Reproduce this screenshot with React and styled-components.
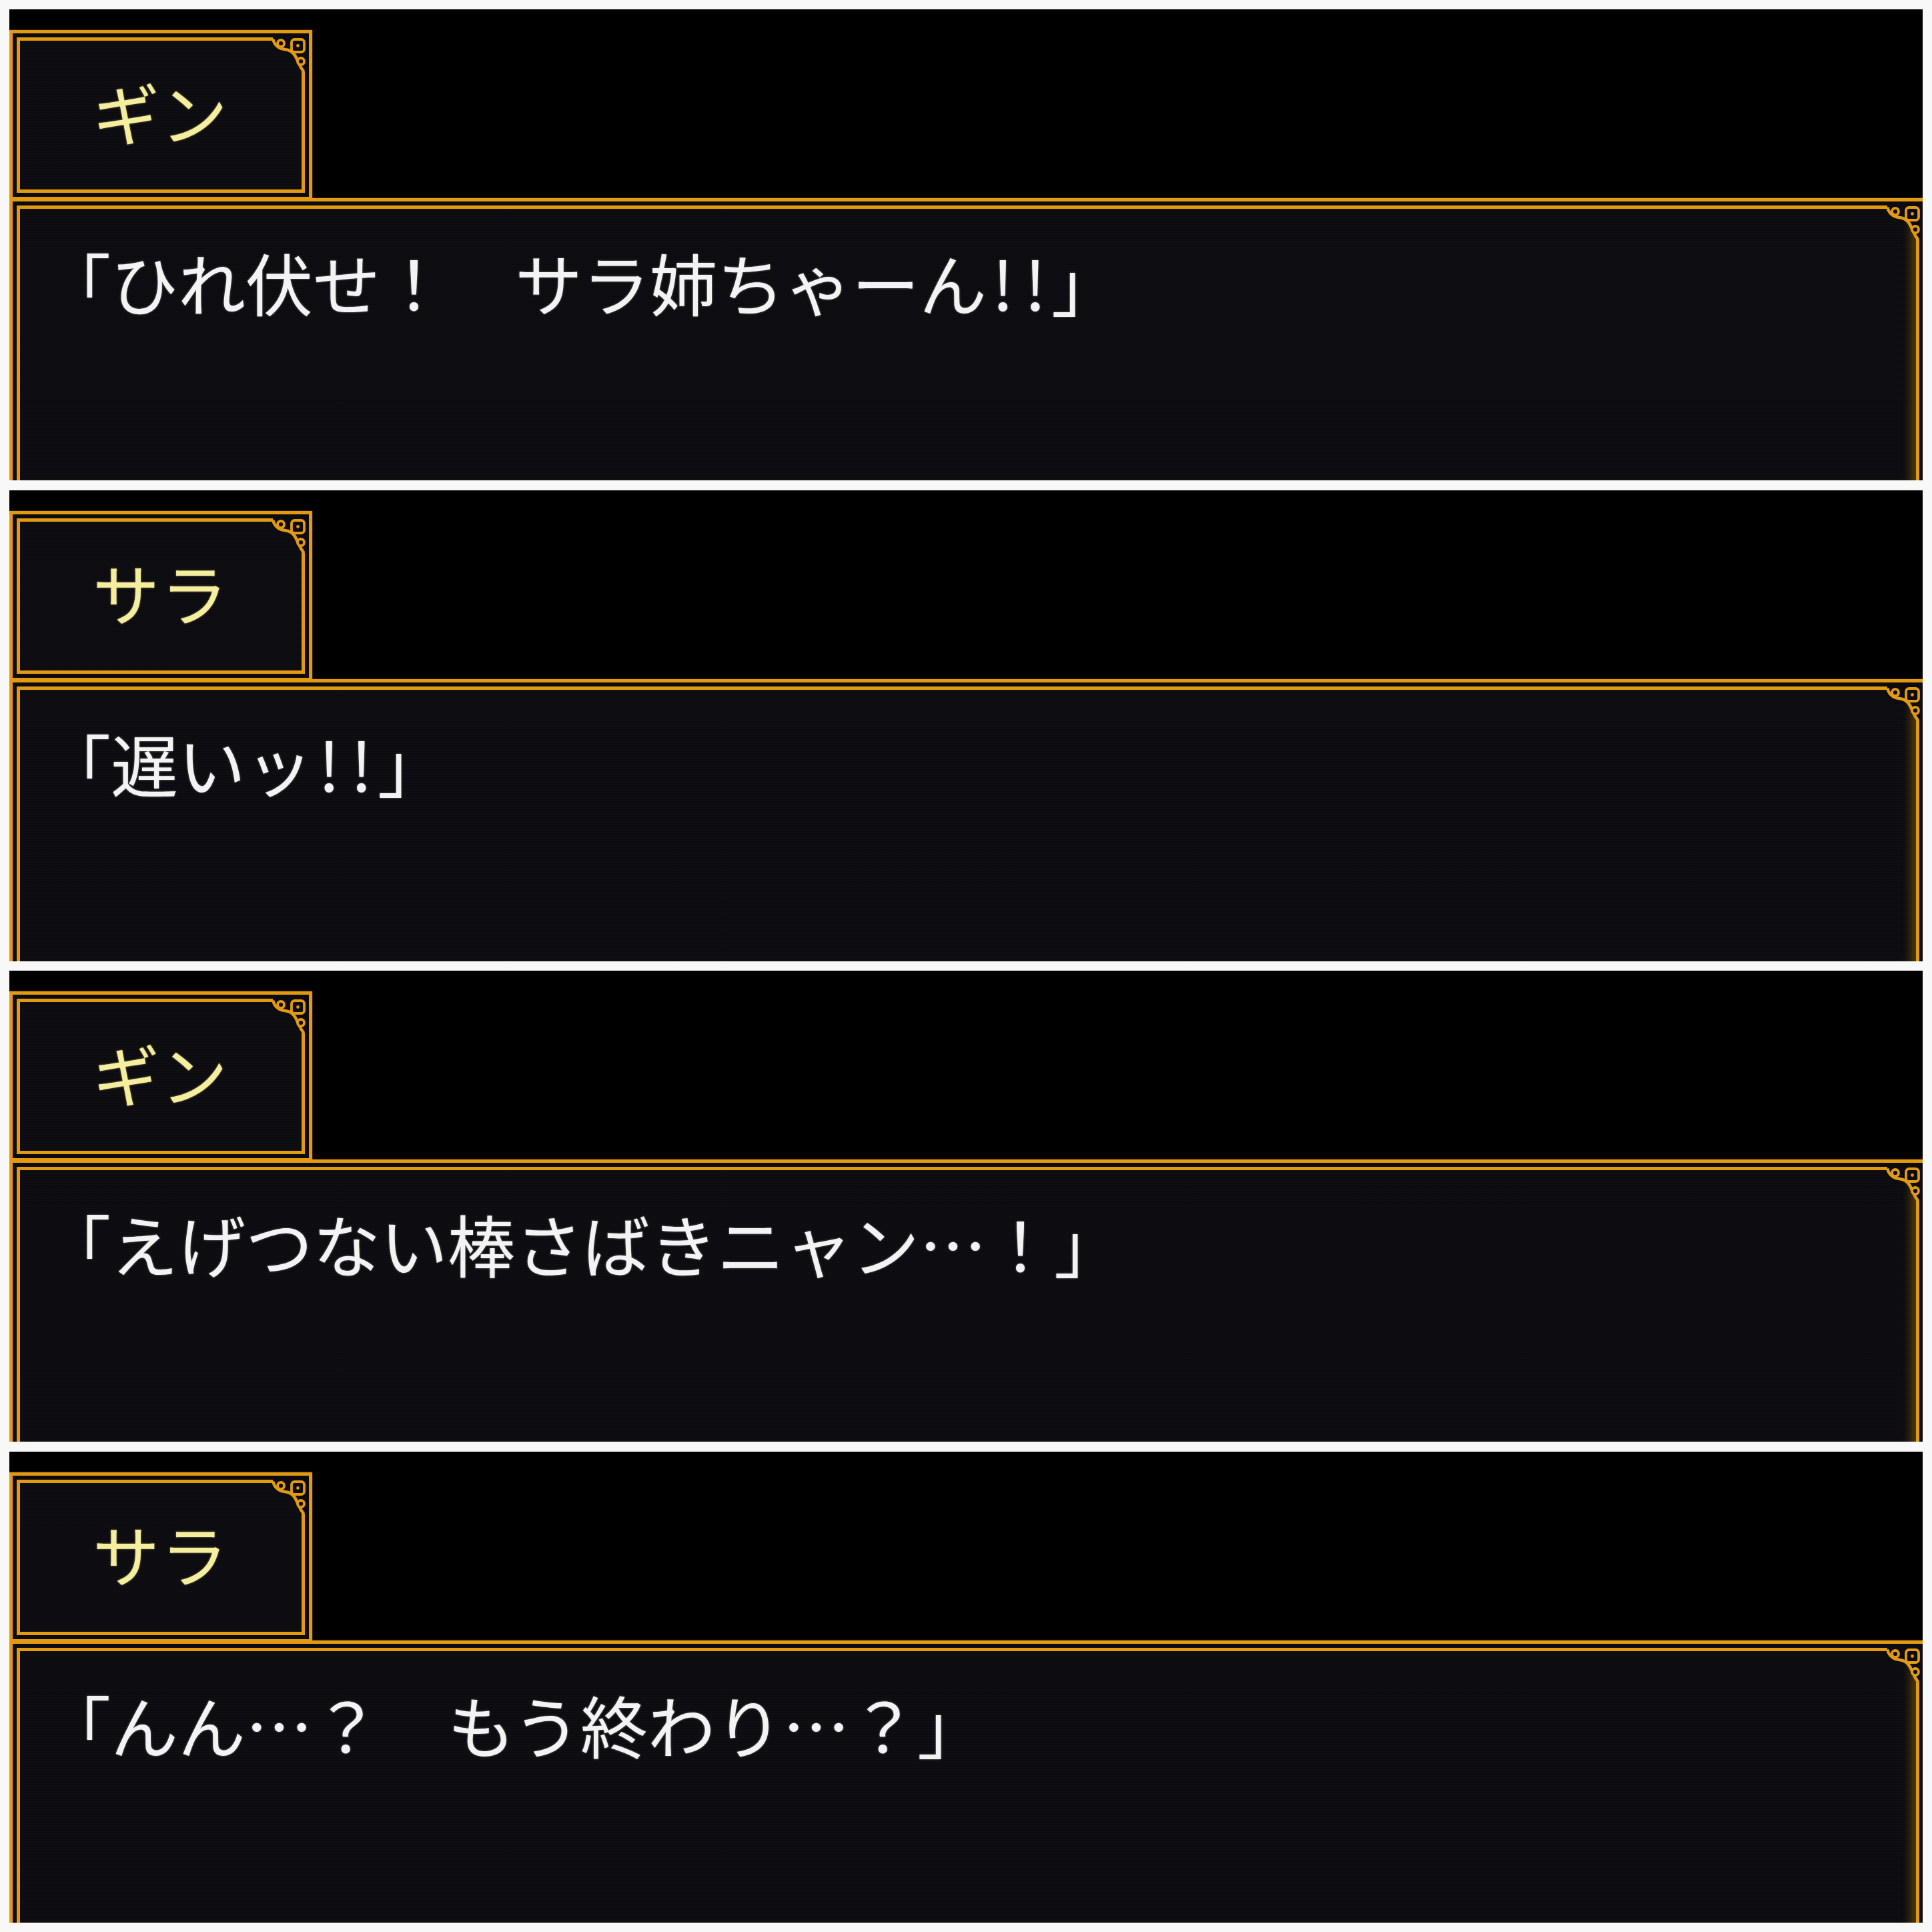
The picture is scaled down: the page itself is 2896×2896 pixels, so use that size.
import React from "react";
import styled, { createGlobalStyle, css } from "styled-components";

const ORANGE = "#e29a12";
const DARK = "#0c0b0f";

const lines = [
  { name: "ギン", text: "「ひれ伏せ！　サラ姉ちゃーん!!」" },
  { name: "サラ", text: "「遅いッ!!」" },
  { name: "ギン", text: "「えげつない棒さばきニャン…！」" },
  { name: "サラ", text: "「んん…？　もう終わり…？」" },
];

const Global = createGlobalStyle`
  html, body { margin: 0; padding: 0; background: #f8f8f8; }
  body { font-family: "Noto Sans CJK JP", "Noto Sans", sans-serif; }
`;

const Page = styled.div`
  width: 2896px;
  height: 2896px;
  box-sizing: border-box;
  padding: 14px;
  display: flex;
  flex-direction: column;
  gap: 14.67px;
`;

const Panel = styled.section`
  height: 706px;
  background: #000;
  overflow: hidden;
  display: flex;
  flex-direction: column;
  padding-top: 31px;
  box-sizing: border-box;
`;

const frame = css`
  box-sizing: border-box;
  border: 5px solid ${ORANGE};
  padding: 6px;
  background: ${DARK};
  box-shadow: 0 0 2px rgba(226, 154, 18, 0.6);
`;

const NameFrame = styled.div`
  ${frame};
  width: 454px;
  height: 255px;
  display: flex;
`;

const DialogFrame = styled.div`
  ${frame};
  width: calc(100% + 6px);
  flex: 1;
  margin-top: -3px;
  border-bottom: none;
  padding-bottom: 0;
  display: flex;
`;

const Inner = styled.div`
  position: relative;
  flex: 1;
  border: 5px solid ${ORANGE};
  background: ${DARK}
    repeating-linear-gradient(
      0deg,
      rgba(255, 255, 255, 0.012) 0 2px,
      transparent 2px 4px
    );
  ${(p) =>
    p.$open &&
    css`
      border-bottom: none;
      box-shadow: inset -16px 0 14px -8px rgba(226, 154, 18, 0.32);
    `}
`;

const NameInner = styled(Inner)`
  display: flex;
  align-items: center;
  justify-content: center;
`;

const Name = styled.span`
  font-size: 100px;
  line-height: 1;
  color: #f4ee9e;
  letter-spacing: 2px;
  text-shadow: 0 0 3px rgba(255, 236, 140, 0.55);
  margin-top: -12px;
`;

const Line = styled.p`
  margin: 0;
  padding: 59px 0 0 35px;
  font-size: 101px;
  line-height: 1;
  color: #f3f3f3;
  white-space: pre;
  text-shadow: 0 0 3px rgba(255, 255, 255, 0.45);
`;

const Half = styled.span`
  display: inline-block;
  width: 0.48em;
  text-align: center;
`;

const OrnamentSvg = styled.svg`
  position: absolute;
  top: -5px;
  right: -5px;
  width: 60px;
  height: 60px;
  overflow: visible;
`;

function Ornament() {
  const edge =
    "M12 2.5 C14 10 18 15 25 17 L35 19 C42 21 46 27 49 35 L53 43 C54 46 56 48 57.5 50";
  return (
    <OrnamentSvg viewBox="0 0 60 60">
      <path d={`${edge} L57.5 52 L62 52 L62 -1 L12 -1 Z`} fill={DARK} />
      <path d={`${edge} L57.5 60`} fill="none" stroke={ORANGE} strokeWidth="4.5" strokeLinejoin="round" />
      <circle cx="24" cy="9" r="5" fill="none" stroke={ORANGE} strokeWidth="3.8" />
      <rect x="40" y="3" width="19" height="19" rx="4.5" fill="none" stroke={ORANGE} strokeWidth="3.8" />
      <circle cx="49.5" cy="12.5" r="2.4" fill={ORANGE} />
      <circle cx="54" cy="36" r="5" fill={DARK} stroke={ORANGE} strokeWidth="3.8" />
    </OrnamentSvg>
  );
}

// half-width "!" in the game font sit on a half em each
function renderText(text) {
  return text.split(/(!)/).map((part, i) =>
    part === "!" ? <Half key={i}>!</Half> : part
  );
}

function Scene({ name, text }) {
  return (
    <Panel>
      <NameFrame>
        <NameInner>
          <Ornament />
          <Name lang="ja">{name}</Name>
        </NameInner>
      </NameFrame>
      <DialogFrame>
        <Inner $open>
          <Ornament />
          <Line lang="ja">{renderText(text)}</Line>
        </Inner>
      </DialogFrame>
    </Panel>
  );
}

export default function App() {
  return (
    <>
      <Global />
      <Page>
        {lines.map((l, i) => (
          <Scene key={i} name={l.name} text={l.text} />
        ))}
      </Page>
    </>
  );
}
